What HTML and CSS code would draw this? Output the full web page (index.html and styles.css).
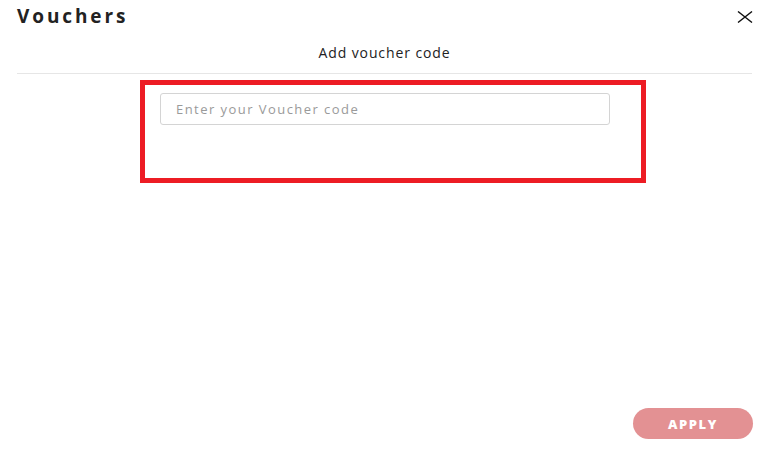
FILE: index.html
```html
<!DOCTYPE html>
<html lang="en">
<head>
<meta charset="utf-8">
<title>Vouchers</title>
<link rel="stylesheet" href="styles.css">
</head>
<body>
<div class="modal">
  <div class="modal-head">
    <h1 class="title">Vouchers</h1>
    <button class="close" aria-label="Close">
      <svg width="16" height="12" viewBox="0 0 16 12"><path d="M1 0.5 L15 11.5 M15 0.5 L1 11.5" stroke="#111" stroke-width="1.4" fill="none"/></svg>
    </button>
  </div>
  <div class="subtitle">Add voucher code</div>
  <div class="divider"></div>
  <div class="highlight">
    <input class="voucher-input" type="text" placeholder="Enter your Voucher code">
  </div>
  <div class="footer">
    <button class="apply">APPLY</button>
  </div>
</div>
</body>
</html>
```
FILE: styles.css
```css
html, body {
  margin: 0;
  padding: 0;
  background: #fff;
}
.modal {
  height: 450px;
  box-sizing: border-box;
  padding: 0 22px 11px 17px;
  display: flex;
  flex-direction: column;
  font-family: "Open Sans", sans-serif;
}
.modal-head {
  display: flex;
  justify-content: space-between;
  align-items: flex-start;
  height: 43px;
}
.title {
  margin: 0;
  padding-top: 3px;
  font-size: 19px;
  font-weight: 700;
  color: #222;
  letter-spacing: 2.9px;
  line-height: 27px;
}
.close {
  border: 0;
  background: none;
  padding: 0;
  margin-top: 11px;
  margin-right: -1px;
  width: 16px;
  height: 12px;
  display: flex;
}
.subtitle {
  text-align: center;
  font-size: 14px;
  color: #222;
  letter-spacing: 0.9px;
  line-height: 20px;
  height: 30px;
}
.divider {
  height: 1px;
  background: #e6e6e6;
  flex: none;
}
.highlight {
  margin: 6px 0 0 123px;
  width: 506px;
  height: 103px;
  box-sizing: border-box;
  border: 5px solid #ed1c24;
  padding: 8px 0 0 15px;
}
.voucher-input {
  display: block;
  width: 450px;
  height: 32px;
  box-sizing: border-box;
  border: 1px solid #d4d4d4;
  border-radius: 3px;
  padding: 0 15px;
  font-family: "Open Sans", sans-serif;
  font-size: 13px;
  letter-spacing: 1.45px;
  color: #333;
  outline: none;
}
.voucher-input::placeholder {
  color: #9a9a9a;
}
.footer {
  margin-top: auto;
  display: flex;
  justify-content: flex-end;
}
.apply {
  width: 120px;
  height: 31px;
  margin-right: -1px;
  border: 0;
  border-radius: 16px;
  background: #e39193;
  color: #fff;
  font-family: "Open Sans", sans-serif;
  font-weight: 800;
  font-size: 13px;
  letter-spacing: 1.6px;
  padding: 0;
}
```
